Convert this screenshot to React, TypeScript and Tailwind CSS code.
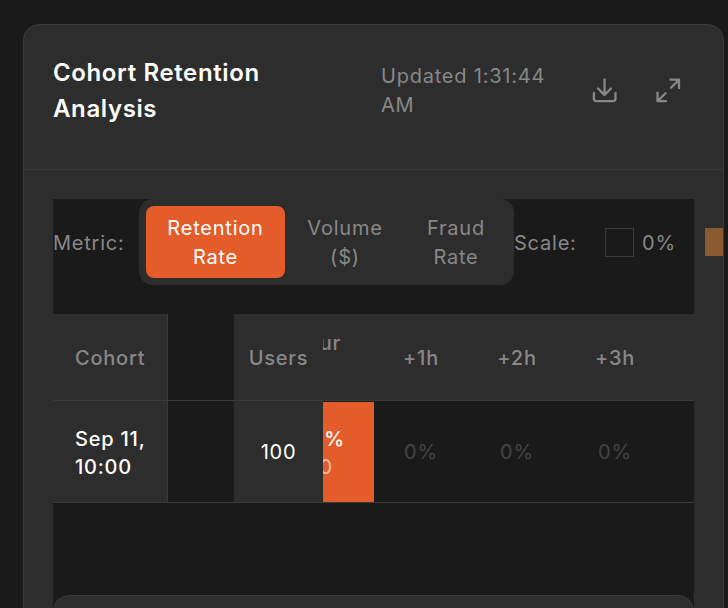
export default function App() {
  return (
    <div className="h-[608px] w-[728px] overflow-hidden bg-[#1a1a1a] pl-[23px] pr-[4px] pt-[24px] font-['Inter',sans-serif] text-[20px] leading-[29px] tracking-[0.78px] text-[#888888]">
      <div className="h-[700px] overflow-hidden rounded-[16px] border border-[#3a3a3a] bg-[#2d2d2d]">
        <header className="flex h-[145px] border-b border-[#3a3a3a] pl-[29px]">
          <h1 className="mt-[30px] w-[328px] pr-[60px] text-[24px] font-semibold leading-[36px] tracking-[0.62px] text-white">Cohort Retention Analysis</h1>
          <div className="mt-[37px] w-[180px]">Updated 1:31:44 AM</div>
          <div className="ml-[29px] mt-[51px] flex gap-[35px]">
            <svg width="29" height="29" viewBox="0 0 29 29" fill="none" stroke="#888888" strokeWidth="2.3" strokeLinecap="round" strokeLinejoin="round" aria-label="Download">
              <path d="M3.9 17v5.7a2.5 2.5 0 0 0 2.5 2.5h16.6a2.5 2.5 0 0 0 2.5-2.5V17" />
              <path d="M14.5 3.3V19M8 12.5l6.5 6.5 6.5-6.5" />
            </svg>
            <svg width="29" height="29" viewBox="0 0 29 29" fill="none" stroke="#888888" strokeWidth="2.3" strokeLinecap="round" strokeLinejoin="round" aria-label="Expand">
              <path d="M16.5 3.7H25v8.5M25 3.7l-8 8M12 25.2H3.5v-8.5M3.5 25.2l8-8" />
            </svg>
          </div>
        </header>

        <div className="px-[29px] pt-[29px]">
          <div className="bg-[#1a1a1a]">
            <div className="flex h-[115px] items-start">
              <span className="mt-[30px] w-[86px] shrink-0">Metric:</span>
              <div className="flex shrink-0 rounded-[14px] bg-[#2d2d2d] p-[7px] text-center">
                <button className="w-[139px] rounded-[8px] bg-[#e35c2a] pb-[6px] pt-[8px] text-white">Retention<br />Rate</button>
                <button className="w-[120px] pb-[6px] pt-[8px]">Volume<br />($)</button>
                <button className="w-[102px] pb-[6px] pt-[8px]">Fraud<br />Rate</button>
              </div>
              <span className="mt-[30px] w-[91px] shrink-0">Scale:</span>
              <span className="mt-[29px] h-[29px] w-[29px] shrink-0 border border-[#3a3a3a] bg-[#1a1a1a]" />
              <span className="ml-[8px] mt-[30px] w-[63px] shrink-0">0%</span>
              <span className="mt-[29px] h-[28px] w-[29px] shrink-0 bg-[#8b5a2f]" />
            </div>

            <div className="grid grid-cols-[115px_66px_89px_51px_94px_98px_98px_30px]">
              <div className="flex h-[87px] items-center border-b border-r border-[#3a3a3a] bg-[#2d2d2d] pl-[22px] pt-[2px] font-medium">Cohort</div>
              <div className="border-b border-[#3a3a3a]" />
              <div className="flex items-center justify-center border-b border-[#3a3a3a] bg-[#2d2d2d] pt-[2px] font-medium">Users</div>
              <div className="flex items-center justify-end overflow-hidden whitespace-nowrap border-b border-[#3a3a3a] bg-[#2d2d2d] pr-[33px] pt-[2px] font-medium">
                <span>Hour<br /><span className="invisible">0</span></span>
              </div>
              <div className="flex items-center justify-center border-b border-[#3a3a3a] bg-[#2d2d2d] pt-[2px] font-medium">+1h</div>
              <div className="flex items-center justify-center border-b border-[#3a3a3a] bg-[#2d2d2d] pt-[2px] font-medium">+2h</div>
              <div className="flex items-center justify-center border-b border-[#3a3a3a] bg-[#2d2d2d] pt-[2px] font-medium">+3h</div>
              <div className="border-b border-[#3a3a3a] bg-[#2d2d2d]" />

              <div className="flex h-[102px] items-center border-b border-r border-[#3a3a3a] bg-[#2d2d2d] pl-[22px] pt-[2px] font-[450] leading-[28px] text-white">Sep 11,<br />10:00</div>
              <div className="border-b border-[#3a3a3a]" />
              <div className="flex items-center justify-center border-b border-[#3a3a3a] bg-[#2d2d2d] pt-[2px] text-white">100</div>
              <div className="border-b border-[#3a3a3a] pt-px">
                <div className="flex h-full flex-col items-end justify-center overflow-hidden whitespace-nowrap bg-[#e35c2a] pt-[2px] leading-[28px]">
                  <span className="pr-[29px] font-[450] text-white">100%</span>
                  <span className="pr-[41px] text-white/60">100</span>
                </div>
              </div>
              <div className="flex items-center justify-center border-b border-[#3a3a3a] pt-[2px] text-[#444444]">0%</div>
              <div className="flex items-center justify-center border-b border-[#3a3a3a] pt-[2px] text-[#444444]">0%</div>
              <div className="flex items-center justify-center border-b border-[#3a3a3a] pt-[2px] text-[#444444]">0%</div>
              <div className="border-b border-[#3a3a3a]" />
            </div>

            <div className="mt-[92px] h-[100px] rounded-[16px] border border-[#3a3a3a] bg-[#2d2d2d]" />
          </div>
        </div>
      </div>
    </div>
  );
}
